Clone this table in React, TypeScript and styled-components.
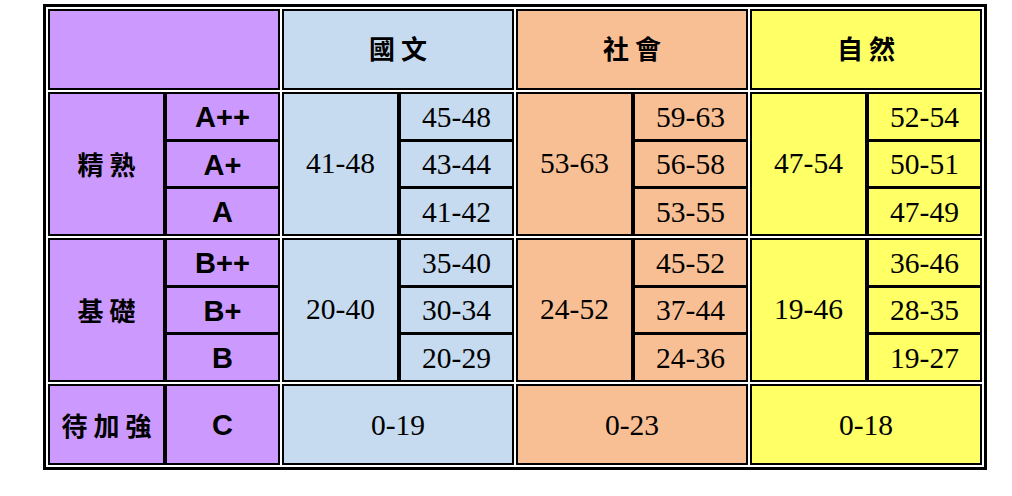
import React from "react";
import styled, { createGlobalStyle } from "styled-components";

const GlobalStyle = createGlobalStyle`
  body {
    margin: 0;
    background: #fff;
  }
`;

const colors = {
  label: "#cc99ff",
  chinese: "#c6dbef",
  social: "#f8bf94",
  science: "#ffff66",
};

const Page = styled.div`
  padding: 4px 0 0 43px;
`;

const Board = styled.div`
  display: inline-grid;
  grid-template-columns: repeat(4, 232px);
  grid-template-rows: 81px 144px 144px 81px;
  gap: 2px;
  padding: 2px;
  border: 3px solid #000;
  background: #fff;
`;

const Cell = styled.div<{ $bg: string }>`
  box-sizing: border-box;
  border: 2px solid #000;
  background: ${(p) => p.$bg};
  display: flex;
  align-items: stretch;
  justify-content: center;
`;

const Half = styled.div`
  flex: 0 0 113px;
  border-right: 4px solid #000;
  display: flex;
  align-items: center;
  justify-content: center;
`;

const Stack = styled.div`
  flex: 1;
  display: flex;
  flex-direction: column;
`;

const Sub = styled.div`
  flex: 1;
  display: flex;
  align-items: center;
  justify-content: center;
  padding-top: 2px;
  & + & {
    border-top: 3px solid #000;
  }
`;

const Center = styled.div<{ $shift?: number }>`
  flex: 1;
  display: flex;
  align-items: center;
  justify-content: center;
  padding-top: ${(p) => (p.$shift ?? 2) > 0 ? `${p.$shift ?? 2}px` : 0};
  padding-bottom: ${(p) => (p.$shift ?? 2) < 0 ? `${-(p.$shift ?? 2)}px` : 0};
`;

const Han = styled.span`
  font-family: "Noto Sans CJK TC", "Noto Sans CJK SC", sans-serif;
  font-weight: 700;
  font-size: 26px;
  letter-spacing: 6px;
  padding-left: 6px;
  line-height: 1;
  color: #000;
`;

const Grade = styled.span`
  font-family: "Liberation Sans", Arial, sans-serif;
  font-weight: 700;
  font-size: 29px;
  line-height: 1;
  color: #000;
`;

const Num = styled.span`
  font-family: "Liberation Serif", "Times New Roman", serif;
  font-size: 29.5px;
  line-height: 1;
  color: #000;
`;

type Subject = {
  key: string;
  name: string;
  bg: string;
  mastery: { total: string; parts: string[] };
  basic: { total: string; parts: string[] };
  weak: string;
};

const subjects: Subject[] = [
  {
    key: "chinese",
    name: "國文",
    bg: colors.chinese,
    mastery: { total: "41-48", parts: ["45-48", "43-44", "41-42"] },
    basic: { total: "20-40", parts: ["35-40", "30-34", "20-29"] },
    weak: "0-19",
  },
  {
    key: "social",
    name: "社會",
    bg: colors.social,
    mastery: { total: "53-63", parts: ["59-63", "56-58", "53-55"] },
    basic: { total: "24-52", parts: ["45-52", "37-44", "24-36"] },
    weak: "0-23",
  },
  {
    key: "science",
    name: "自然",
    bg: colors.science,
    mastery: { total: "47-54", parts: ["52-54", "50-51", "47-49"] },
    basic: { total: "19-46", parts: ["36-46", "28-35", "19-27"] },
    weak: "0-18",
  },
];

const LevelBlock = ({ title, grades }: { title: string; grades: string[] }) => (
  <Cell $bg={colors.label}>
    <Half>
      <Han>{title}</Han>
    </Half>
    <Stack>
      {grades.map((g) => (
        <Sub key={g}>
          <Grade>{g}</Grade>
        </Sub>
      ))}
    </Stack>
  </Cell>
);

const RangeBlock = ({ bg, total, parts }: { bg: string; total: string; parts: string[] }) => (
  <Cell $bg={bg}>
    <Half>
      <Num>{total}</Num>
    </Half>
    <Stack>
      {parts.map((p) => (
        <Sub key={p}>
          <Num>{p}</Num>
        </Sub>
      ))}
    </Stack>
  </Cell>
);

export default function App() {
  return (
    <Page>
      <GlobalStyle />
      <Board>
        <Cell $bg={colors.label} />
        {subjects.map((s) => (
          <Cell key={s.key} $bg={s.bg}>
            <Center $shift={-4}>
              <Han>{s.name}</Han>
            </Center>
          </Cell>
        ))}

        <LevelBlock title="精熟" grades={["A++", "A+", "A"]} />
        {subjects.map((s) => (
          <RangeBlock key={s.key} bg={s.bg} total={s.mastery.total} parts={s.mastery.parts} />
        ))}

        <LevelBlock title="基礎" grades={["B++", "B+", "B"]} />
        {subjects.map((s) => (
          <RangeBlock key={s.key} bg={s.bg} total={s.basic.total} parts={s.basic.parts} />
        ))}

        <Cell $bg={colors.label}>
          <Half>
            <Han>待加強</Han>
          </Half>
          <Center>
            <Grade>C</Grade>
          </Center>
        </Cell>
        {subjects.map((s) => (
          <Cell key={s.key} $bg={s.bg}>
            <Center>
              <Num>{s.weak}</Num>
            </Center>
          </Cell>
        ))}
      </Board>
    </Page>
  );
}
